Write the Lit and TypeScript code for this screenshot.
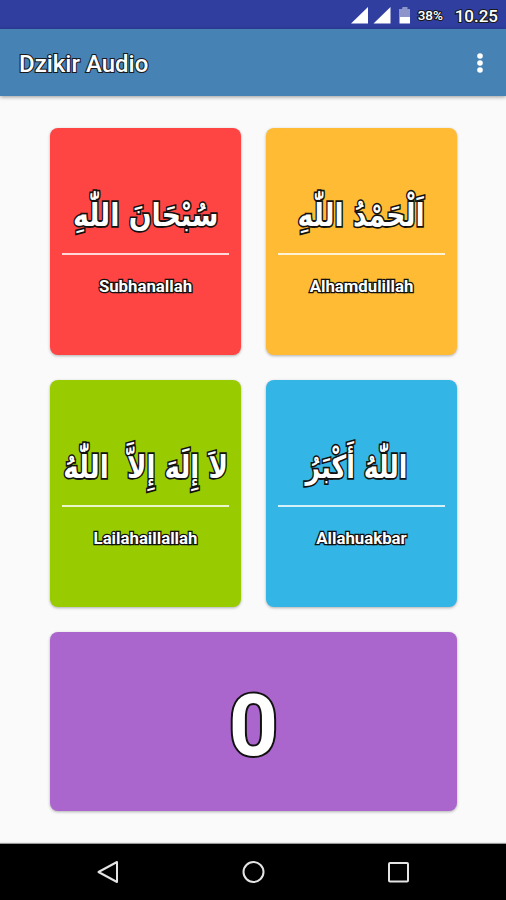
import { LitElement, html, css } from "lit";
import { customElement, property, state } from "lit/decorators.js";
import { styleMap } from "lit/directives/style-map.js";

@customElement("dzikir-card")
class DzikirCard extends LitElement {
  @property() arabic = "";
  @property() label = "";
  @property({ type: Number }) stretch = 1;
  @property({ type: Number }) shift = 0;

  static styles = css`
    :host {
      display: flex;
      flex-direction: column;
      align-items: center;
      border-radius: 8px;
      box-shadow: 0 1px 3px rgba(0, 0, 0, 0.3);
      color: #fff;
      cursor: pointer;
    }
    .arabic {
      height: 125px;
      display: flex;
      align-items: center;
      white-space: pre;
      font: bold 29px/44px "DejaVu Sans", sans-serif;
      -webkit-text-stroke: 3px #111;
      paint-order: stroke fill;
      padding-top: 45px;
      box-sizing: border-box;
    }
    .rule {
      width: 167px;
      height: 2px;
      background: rgba(255, 255, 255, 0.8);
    }
    .label {
      margin-top: 20px;
      font: bold 16.8px/22px Roboto, sans-serif;
      -webkit-text-stroke: 2.6px #111;
      paint-order: stroke fill;
    }
  `;

  render() {
    const fit = {
      transform: `translateX(${this.shift}px) scale(${this.stretch}, 1.1)`,
    };
    return html`
      <div class="arabic" lang="ar" dir="rtl" style=${styleMap(fit)}>${this.arabic}</div>
      <div class="rule"></div>
      <div class="label">${this.label}</div>
    `;
  }
}

@customElement("app-root")
class AppRoot extends LitElement {
  @state() count = 0;

  private cards = [
    { tone: "red", arabic: "سُبْحَانَ اللّٰهِ", label: "Subhanallah", stretch: 0.925, shift: 0 },
    { tone: "amber", arabic: "اَلْحَمْدُ اللّٰهِ", label: "Alhamdulillah", stretch: 0.92, shift: 0 },
    { tone: "green", arabic: "لاَ إِلَهَ إِلاَّ  اللّٰهُ", label: "Lailahaillallah", stretch: 0.905, shift: 0.5 },
    { tone: "blue", arabic: "اللّٰهُ أَكْبَرُ", label: "Allahuakbar", stretch: 0.87, shift: -5 },
  ];

  static styles = css`
    :host {
      display: flex;
      flex-direction: column;
      height: 900px;
      background: #fafafa;
      font-family: Roboto, sans-serif;
      color: #fff;
      overflow: hidden;
    }
    .status {
      height: 29px;
      flex: none;
      background: #303f9f;
      display: flex;
      justify-content: flex-end;
      align-items: center;
      padding-right: 8px;
      box-sizing: border-box;
    }
    .signals {
      width: 62px;
      height: 18px;
      margin-right: 7px;
    }
    .percent {
      font: 500 13.500px/20px Roboto, sans-serif;
      width: 27px;
      margin-right: 10px;
      padding-top: 1px;
    }
    .clock {
      font: 500 17px/20px Roboto, sans-serif;
      padding-top: 3px;
    }
    .percent,
    .clock,
    .title {
      -webkit-text-stroke: 2.2px #1a1a1a;
      paint-order: stroke fill;
    }
    .bar {
      height: 67px;
      flex: none;
      background: #4682b4;
      box-shadow: 0 1px 4px rgba(0, 0, 0, 0.4);
      display: flex;
      align-items: center;
      justify-content: space-between;
      padding: 0 20px 0 19px;
    }
    .title {
      font: 500 24px/30px Roboto, sans-serif;
      padding-top: 2px;
    }
    .more {
      width: 12px;
      height: 24px;
    }
    main {
      flex: 1;
      padding: 32px 49px 0 50px;
    }
    .grid {
      display: grid;
      grid-template-columns: 191px 191px;
      grid-template-rows: 227px 227px 179px;
      gap: 25px;
    }
    .red { background: #ff4444; }
    .amber { background: #ffbb33; }
    .green { background: #99cc00; }
    .blue { background: #33b5e5; }
    .counter {
      grid-column: 1 / 3;
      background: #aa66cc;
      border-radius: 8px;
      box-shadow: 0 1px 3px rgba(0, 0, 0, 0.3);
      display: flex;
      align-items: center;
      justify-content: center;
      font: bold 86px/100px Roboto, sans-serif;
      -webkit-text-stroke: 4px #111;
      paint-order: stroke fill;
      padding-top: 9px;
      box-sizing: border-box;
    }
    nav {
      height: 56px;
      flex: none;
      background: #000;
      display: flex;
      justify-content: center;
      align-items: center;
      gap: 121px;
      box-shadow: 0 -1px 1px #999;
    }
    nav svg {
      width: 24px;
      height: 24px;
      fill: none;
      stroke: #e4e4e4;
      stroke-width: 2;
      stroke-linejoin: round;
    }
  `;

  render() {
    return html`
      <div class="status">
        <svg class="signals" viewBox="0 0 62 18" fill="#fff">
          <path d="M2 17.500 19 1v16.500zM24.500 17.500 41.500 1v16.500z" />
          <path d="M53.500 1h5v2h2.500v8h-11V3h3z" opacity=".45" />
          <path d="M50.500 11h10.500v6.500h-10.500z" />
        </svg>
        <span class="percent">38%</span>
        <span class="clock">10.25</span>
      </div>
      <header class="bar">
        <div class="title">Dzikir Audio</div>
        <svg class="more" viewBox="0 0 12 24" fill="#fff">
          <circle cx="6" cy="5" r="2.800" />
          <circle cx="6" cy="12" r="2.800" />
          <circle cx="6" cy="19" r="2.800" />
        </svg>
      </header>
      <main>
        <div class="grid">
          ${this.cards.map(
            (c) => html`<dzikir-card
              class=${c.tone}
              .arabic=${c.arabic}
              .label=${c.label}
              .stretch=${c.stretch}
              .shift=${c.shift}
              @click=${() => this.count++}
            ></dzikir-card>`
          )}
          <div class="counter">${this.count}</div>
        </div>
      </main>
      <nav>
        <svg viewBox="0 0 24 24"><path d="M21 2v20L2.500 12z" /></svg>
        <svg viewBox="0 0 24 24"><circle cx="12.500" cy="12" r="10" /></svg>
        <svg viewBox="0 0 24 24"><rect x="3" y="3" width="19" height="18.500" rx="1" /></svg>
      </nav>
    `;
  }
}
